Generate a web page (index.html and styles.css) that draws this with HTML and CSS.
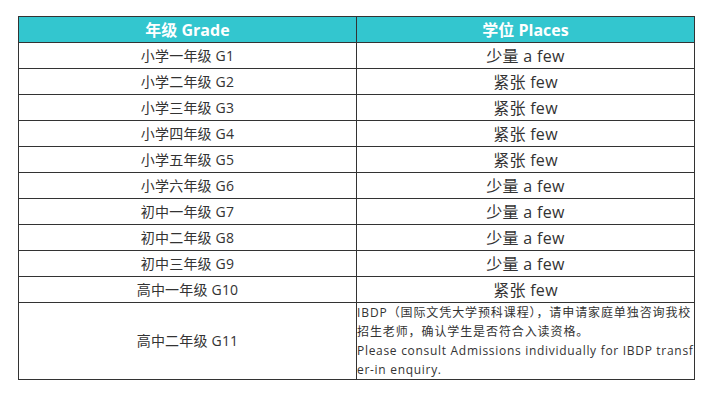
FILE: index.html
```html
<!DOCTYPE html>
<html lang="zh">
<head>
<meta charset="utf-8">
<link rel="stylesheet" href="styles.css">
</head>
<body>
<table class="grades">
  <thead>
    <tr><th>年级 Grade</th><th>学位 Places</th></tr>
  </thead>
  <tbody>
    <tr><td class="g">小学一年级 G1</td><td class="p">少量 a few</td></tr>
    <tr><td class="g">小学二年级 G2</td><td class="p">紧张 few</td></tr>
    <tr><td class="g">小学三年级 G3</td><td class="p">紧张 few</td></tr>
    <tr><td class="g">小学四年级 G4</td><td class="p">紧张 few</td></tr>
    <tr><td class="g">小学五年级 G5</td><td class="p">紧张 few</td></tr>
    <tr><td class="g">小学六年级 G6</td><td class="p">少量 a few</td></tr>
    <tr><td class="g">初中一年级 G7</td><td class="p">少量 a few</td></tr>
    <tr><td class="g">初中二年级 G8</td><td class="p">少量 a few</td></tr>
    <tr><td class="g">初中三年级 G9</td><td class="p">少量 a few</td></tr>
    <tr><td class="g">高中一年级 G10</td><td class="p">紧张 few</td></tr>
    <tr class="tall"><td class="g">高中二年级 G11</td><td class="note"><p class="zh">IBDP（国际文凭大学预科课程），请申请家庭单独咨询我校招生老师，确认学生是否符合入读资格。</p><p class="en">Please consult Admissions individually for IBDP transfer-in enquiry.</p></td></tr>
  </tbody>
</table>
</body>
</html>
```
FILE: styles.css
```css
html, body { margin: 0; padding: 0; background: #fff; }
body { padding: 16px 0 0 18px; font-family: "Open Sans", "Noto Sans CJK SC", sans-serif; color: #333; }
.grades { border-collapse: collapse; width: 677px; table-layout: fixed; }
.grades th, .grades td { border: 1px solid #333; padding: 0; text-align: center; height: 25px; line-height: 20px; }
.grades th { background: #33c6cf; color: #fff; font-size: 16px; font-weight: bold; }
.grades td.g { font-size: 14px; letter-spacing: 0.2px; }
.grades td.p { font-size: 16px; letter-spacing: 0.3px; }
.grades tr.tall td { height: 76px; }
.grades td.note { text-align: left; font-size: 12px; line-height: 19px; word-break: break-all; vertical-align: middle; }
.note p { margin: 0; }
.note .zh { letter-spacing: 0.9px; }
.note .en { letter-spacing: 0.7px; }
```
